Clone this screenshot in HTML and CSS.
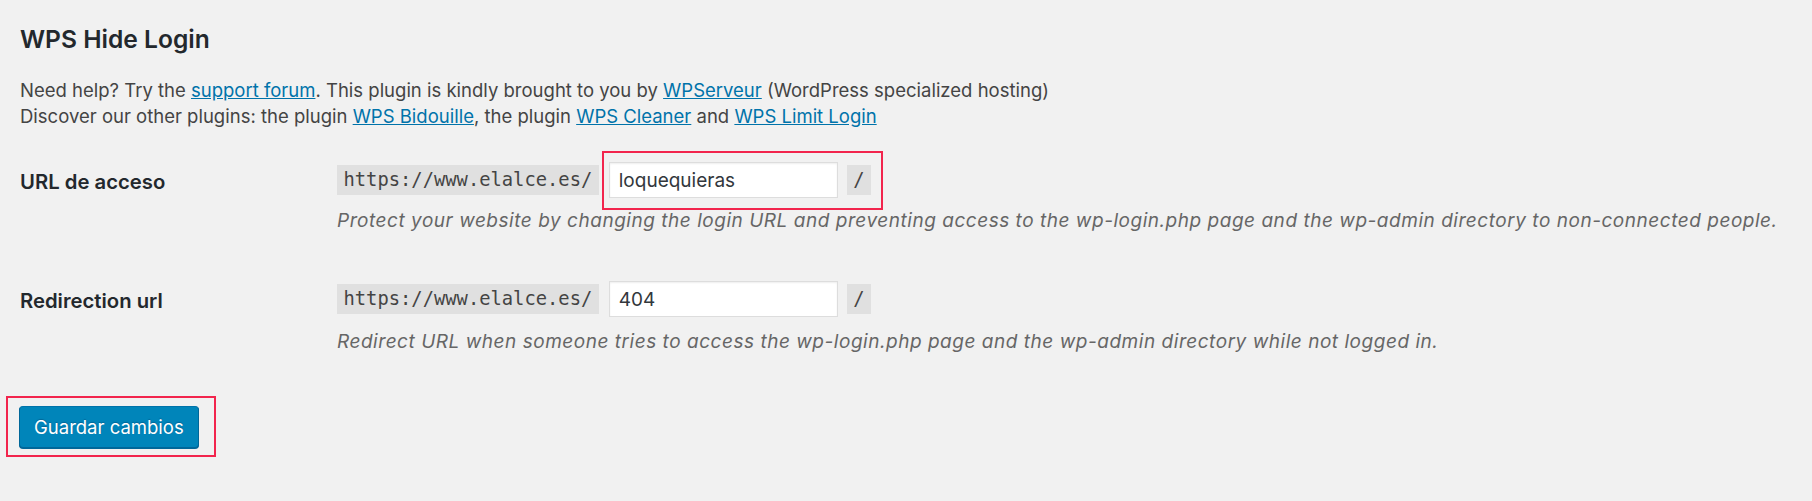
FILE: index.html
```html
<!DOCTYPE html>
<html lang="en">
<head>
    <meta charset="UTF-8">
    <meta name="viewport" content="width=device-width, initial-scale=1.0">
    <title>WPS Hide Login</title>
    <link rel="stylesheet" href="styles.css">
</head>
<body>
    <div class="wrap">
        <h1>WPS Hide Login</h1>
        <p class="intro">
            Need help? Try the <a href="#">support forum</a>. This plugin is kindly brought to you by <a href="#">WPServeur</a> (WordPress specialized hosting)<br>
            Discover our other plugins: the plugin <a href="#">WPS Bidouille</a>, the plugin <a href="#">WPS Cleaner</a> and <a href="#">WPS Limit Login</a>
        </p>

        <form class="settings">
            <div class="field-row first">
                <label class="field-label" for="login">URL de acceso</label>
                <div class="field">
                    <div class="field-line">
                        <code>https://www.elalce.es/</code>
                        <span class="marked marked-input">
                            <input type="text" id="login" value="loquequieras">
                            <code>/</code>
                        </span>
                    </div>
                    <p class="description">Protect your website by changing the login URL and preventing access to the wp-login.php page and the wp-admin directory to non-connected people.</p>
                </div>
            </div>

            <div class="field-row second">
                <label class="field-label" for="redirect">Redirection url</label>
                <div class="field">
                    <div class="field-line">
                        <code>https://www.elalce.es/</code>
                        <input type="text" id="redirect" value="404">
                        <code>/</code>
                    </div>
                    <p class="description">Redirect URL when someone tries to access the wp-login.php page and the wp-admin directory while not logged in.</p>
                </div>
            </div>

            <div class="submit">
                <div class="marked marked-button">
                    <button type="submit" class="button-primary">Guardar cambios</button>
                </div>
            </div>
        </form>
    </div>
</body>
</html>
```

FILE: styles.css
```css
body {
    margin: 0;
    background: #f1f1f1;
    color: #444;
    font-family: Inter, "Liberation Sans", sans-serif;
}
.wrap {
    min-height: 501px;
    padding: 0 20px;
    box-sizing: border-box;
}
h1 {
    margin: 0;
    padding-top: 23px;
    font-size: 24.6px;
    font-weight: 600;
    line-height: 32px;
    color: #23282d;
}
.intro {
    margin: 22px 0 0;
    font-size: 18.5px;
    line-height: 26px;
}
.intro a {
    color: #0073aa;
}
.field-row {
    display: grid;
    grid-template-columns: 317px auto;
    align-items: start;
}
.field-row.first {
    padding-top: 33px;
}
.field-row.second {
    padding-top: 48px;
}
.field-label {
    padding-top: 2px;
    font-size: 20.3px;
    font-weight: 600;
    line-height: 36px;
    color: #23282d;
}
.field-line {
    display: flex;
    align-items: center;
    height: 36px;
}
.field-line code {
    margin-right: 10px;
}
code {
    display: inline-block;
    padding: 0 6.5px;
    background: rgba(0, 0, 0, 0.07);
    font-family: "DejaVu Sans Mono", "Liberation Mono", monospace;
    font-size: 18.8px;
    line-height: 30px;
    color: #444;
}
input[type="text"] {
    box-sizing: border-box;
    width: 229px;
    height: 36px;
    margin-right: 9px;
    padding: 0 9px;
    border: 1px solid #ddd;
    background: #fff;
    box-shadow: inset 0 1px 2px rgba(0, 0, 0, 0.07);
    font-family: Inter, "Liberation Sans", sans-serif;
    font-size: 19px;
    color: #32373c;
}
.marked {
    position: relative;
    display: flex;
    align-items: center;
}
.marked-input code {
    margin-right: 0;
}
.marked::after {
    content: "";
    position: absolute;
    border: 2px solid #f2254d;
    pointer-events: none;
}
.marked-input::after {
    top: -11px;
    left: -7px;
    right: -12px;
    bottom: -12px;
}
.marked-button::after {
    top: -10px;
    left: -14px;
    right: -17px;
    bottom: -9px;
}
.description {
    margin: 10px 0 0;
    font-size: 19px;
    font-style: italic;
    letter-spacing: 0.53px;
    line-height: 25px;
    color: #666;
}
.second .description {
    margin-top: 12px;
}
.submit {
    display: flex;
    padding-top: 52px;
}
.button-primary {
    box-sizing: border-box;
    height: 42px;
    margin-left: -1px;
    padding: 0 14px;
    border: 1px solid;
    border-color: #0073aa #006799 #006799;
    border-radius: 4px;
    background: #0085ba;
    box-shadow: 0 1px 0 #006799;
    text-shadow: 0 -1px 1px #006799;
    font-family: Inter, "Liberation Sans", sans-serif;
    font-size: 18.5px;
    color: #fff;
    cursor: pointer;
}
```
